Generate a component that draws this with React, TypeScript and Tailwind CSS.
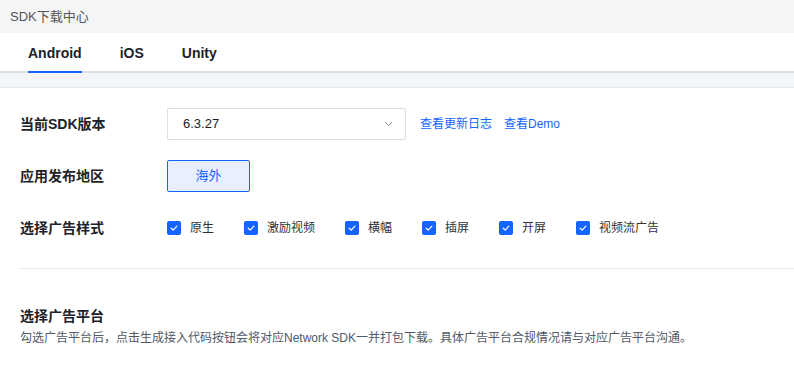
import React from "react";

const font = { fontFamily: '"Liberation Sans","Noto Sans CJK SC",sans-serif' };

function Check() {
  return (
    <span className="flex h-[14px] w-[14px] items-center justify-center rounded-[2px] bg-[#1664ff]">
      <svg width="10" height="10" viewBox="0 0 10 10" fill="none">
        <path d="M2.2 5.2 L4.2 7.1 L7.9 3.1" stroke="white" strokeWidth="1.2" strokeLinecap="round" strokeLinejoin="round" />
      </svg>
    </span>
  );
}

export default function App() {
  const styles = ["原生", "激励视频", "横幅", "插屏", "开屏", "视频流广告"];
  return (
    <div className="w-[794px] h-[365px] overflow-hidden bg-white" style={font}>
      <div className="flex h-[33px] items-center bg-[#f4f5f7] pl-[10px] text-[13px] text-[#555]">SDK下载中心</div>
      <div className="flex h-[40px] items-stretch gap-[38px] border-b-2 border-[#d9e0e8] bg-white pl-[28px] pt-[2px]">
        <div className="relative flex items-center text-[14px] font-semibold text-[#1d2129]">
          Android
          <span className="absolute -bottom-[2px] left-0 right-0 h-[2px] bg-[#1664ff]" />
        </div>
        <div className="flex items-center text-[14px] font-semibold text-[#1d2129]">iOS</div>
        <div className="flex items-center text-[14px] font-semibold text-[#1d2129]">Unity</div>
      </div>
      <div className="h-[14px] bg-[#f4f5f7]" />
      <div className="border-t border-[#e5e8ef] bg-white pl-[20px] pt-[20px]">
        <div className="flex flex-col gap-[20px]">
          <div className="flex h-[32px] items-center">
            <div className="w-[147px] text-[14px] font-semibold text-[#1d2129]">当前SDK版本</div>
            <div className="flex h-[32px] w-[239px] items-center justify-between rounded-[2px] border border-[#dcdfe6] pl-[15px] pr-[12px] text-[13px] text-[#1d2129]">
              <span>6.3.27</span>
              <svg width="9" height="6" viewBox="0 0 9 6" fill="none">
                <path d="M1 1 L4.5 4.5 L8 1" stroke="#8a8f99" strokeWidth="1" />
              </svg>
            </div>
            <a className="ml-[14px] text-[12px] text-[#1664ff]">查看更新日志</a>
            <a className="ml-[12px] text-[12px] text-[#1664ff]">查看Demo</a>
          </div>
          <div className="flex h-[32px] items-center">
            <div className="w-[147px] text-[14px] font-semibold text-[#1d2129]">应用发布地区</div>
            <div className="flex h-[32px] w-[83px] items-center justify-center rounded-[2px] border border-[#1664ff] bg-[#e8f0ff] text-[13px] text-[#1664ff]">海外</div>
          </div>
          <div className="flex h-[32px] items-center">
            <div className="w-[147px] text-[14px] font-semibold text-[#1d2129]">选择广告样式</div>
            <div className="flex items-center gap-[30px]">
              {styles.map((s) => (
                <div key={s} className="flex items-center gap-[9px]">
                  <Check />
                  <span className="text-[12px] text-[#333]">{s}</span>
                </div>
              ))}
            </div>
          </div>
        </div>
        <div className="mt-[24px] border-t border-[#e5e8ef]" />
        <div className="pt-[37px] text-[14px] font-semibold leading-[20px] text-[#1d2129]">选择广告平台</div>
        <div className="mt-[2px] text-[12px] leading-[20px] text-[#4e5969]">
          勾选广告平台后，点击生成接入代码按钮会将对应Network SDK一并打包下载。具体广告平台合规情况请与对应广告平台沟通。
        </div>
      </div>
    </div>
  );
}
